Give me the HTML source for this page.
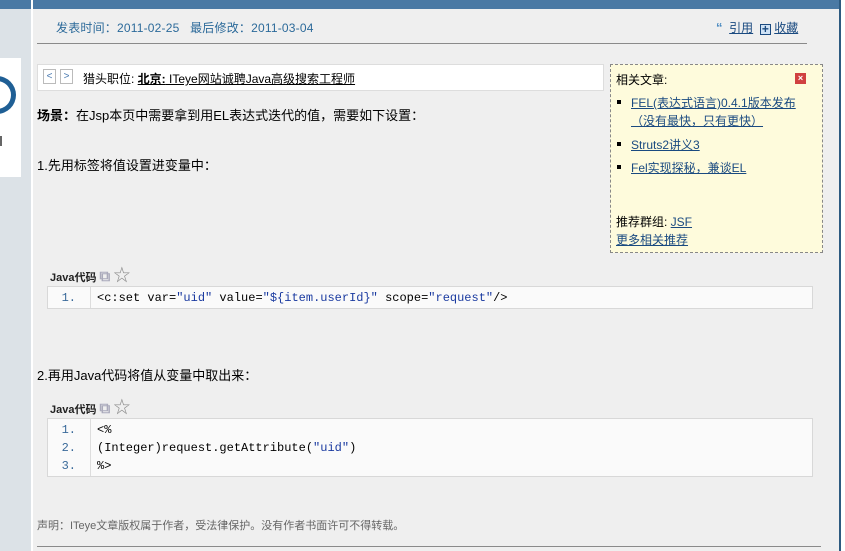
<!DOCTYPE html>
<html><head><meta charset="utf-8"><style>
*{margin:0;padding:0;box-sizing:border-box}
body{width:845px;height:551px;overflow:hidden;background:#fff;font-family:"Liberation Sans","Noto Sans CJK SC",sans-serif;font-size:12px;color:#000;position:relative}
.a{position:absolute}
a{color:#1a4a80;text-decoration:underline}
.code{position:absolute;left:47px;width:766px;background:#fafafa;border:1px solid #d8d8d8;font-family:"Liberation Mono","Noto Sans CJK SC",monospace;font-size:12px}
.ln{position:absolute;left:0;width:28px;text-align:right;color:#3a6a9a}
.cl{position:absolute;left:49px;color:#000}
.s{color:#1a3aa0}
.hdr{position:absolute;left:50px;font-size:11px;font-weight:bold;color:#222}
</style></head><body>
<div class="a" style="left:0;top:0;width:32px;height:551px;background:#dce2e7"></div>
<div class="a" style="left:31px;top:0;width:2px;height:551px;background:#fff"></div>
<div class="a" style="left:0;top:0;width:31px;height:9px;background:#4a79a4"></div>
<div class="a" style="left:0;top:58px;width:21px;height:119px;background:#fff;overflow:hidden">
<div class="a" style="left:-22px;top:18px;width:38px;height:38px;border:5px solid #1f5f95;border-radius:50%;border-left-color:transparent"></div>
<div class="a" style="left:0;top:78px;width:2px;height:10px;background:#666"></div>
</div>
<div class="a" style="left:33px;top:0;width:806px;height:551px;background:#efefef"></div>
<div class="a" style="left:33px;top:0;width:806px;height:9px;background:#4a79a4"></div>
<div class="a" style="left:839px;top:0;width:2px;height:551px;background:#2d5a80"></div>
<div class="a" style="left:56px;top:19px;color:#2c6a9a;font-size:12px;letter-spacing:0.2px">发表时间：2011-02-25&nbsp;&nbsp;&nbsp;最后修改：2011-03-04</div>
<div class="a" style="left:716px;top:19px;font-size:12px"><span style="color:#4a8ac0;font-weight:bold;font-size:13px">“</span>&nbsp; <a>引用</a>&nbsp;&nbsp;<span style="display:inline-block;width:11px;height:11px;border:1px solid #1a4a80;background:#cfe2f5;vertical-align:-1px;text-align:center;line-height:8px;font-weight:bold;color:#1a4a80">+</span> <a>收藏</a></div>
<div class="a" style="left:37px;top:43px;width:770px;height:1px;background:#8a8a8a"></div>
<div class="a" style="left:37px;top:64px;width:567px;height:27px;background:#fff;border:1px solid #ddd"></div>
<div class="a" style="left:43px;top:69px;width:13px;height:15px;border:1px solid #bbb;font-size:10px;color:#4a7ab0;text-align:center;line-height:13px">&lt;</div>
<div class="a" style="left:60px;top:69px;width:13px;height:15px;border:1px solid #bbb;font-size:10px;color:#4a7ab0;text-align:center;line-height:13px">&gt;</div>
<div class="a" style="left:83px;top:70px;font-size:12px">猎头职位: <a style="color:#000"><b>北京:</b> ITeye网站诚聘Java高级搜索工程师</a></div>
<div class="a" style="left:37px;top:105px;font-size:13px"><b>场景：</b>在Jsp本页中需要拿到用EL表达式迭代的值，需要如下设置：</div>
<div class="a" style="left:37px;top:155px;font-size:13px">1.先用标签将值设置进变量中：</div>
<div class="a" style="left:610px;top:64px;width:213px;height:189px;background:#fefbdc;border:1px dashed #888"></div>
<div class="a" style="left:616px;top:71px">相关文章:</div>
<div class="a" style="left:795px;top:73px;width:11px;height:11px;background:#d04040;color:#fff;font-size:9px;line-height:11px;text-align:center;font-weight:bold">×</div>
<div class="a" style="left:617px;top:100px;width:4px;height:4px;background:#000"></div>
<div class="a" style="left:631px;top:94px;line-height:18px"><a>FEL(表达式语言)0.4.1版本发布<br>（没有最快，只有更快）</a></div>
<div class="a" style="left:617px;top:142px;width:4px;height:4px;background:#000"></div>
<div class="a" style="left:631px;top:136px"><a>Struts2讲义3</a></div>
<div class="a" style="left:617px;top:165px;width:4px;height:4px;background:#000"></div>
<div class="a" style="left:631px;top:159px"><a>Fel实现探秘，兼谈EL</a></div>
<div class="a" style="left:616px;top:213px">推荐群组: <a>JSF</a></div>
<div class="a" style="left:616px;top:231px"><a>更多相关推荐</a></div>
<div class="hdr" style="top:261px">Java代码 <span style="color:#aab;font-size:15px">⧉</span> <span style="color:#888;font-size:17px;font-weight:normal">☆</span></div>
<div class="code" style="top:286px;height:23px"><div style="position:absolute;left:42px;top:0;width:1px;height:100%;background:#ddd"></div>
<div class="ln" style="top:4px">1.</div><div class="cl" style="top:4px">&lt;c:set var=<span class="s">"uid"</span> value=<span class="s">"${item.userId}"</span> scope=<span class="s">"request"</span>/&gt;</div></div>
<div class="a" style="left:37px;top:365px;font-size:13px">2.再用Java代码将值从变量中取出来：</div>
<div class="hdr" style="top:393px">Java代码 <span style="color:#aab;font-size:15px">⧉</span> <span style="color:#888;font-size:17px;font-weight:normal">☆</span></div>
<div class="code" style="top:418px;height:59px"><div style="position:absolute;left:42px;top:0;width:1px;height:100%;background:#ddd"></div>
<div class="ln" style="top:4px">1.</div><div class="cl" style="top:4px">&lt;%</div>
<div class="ln" style="top:22px">2.</div><div class="cl" style="top:22px">(Integer)request.getAttribute(<span class="s">"uid"</span>)</div>
<div class="ln" style="top:40px">3.</div><div class="cl" style="top:40px">%&gt;</div></div>
<div class="a" style="left:37px;top:517px;font-size:11px;color:#666">声明：ITeye文章版权属于作者，受法律保护。没有作者书面许可不得转载。</div>
<div class="a" style="left:37px;top:546px;width:784px;height:1px;background:#8a8a8a"></div>
</body></html>
